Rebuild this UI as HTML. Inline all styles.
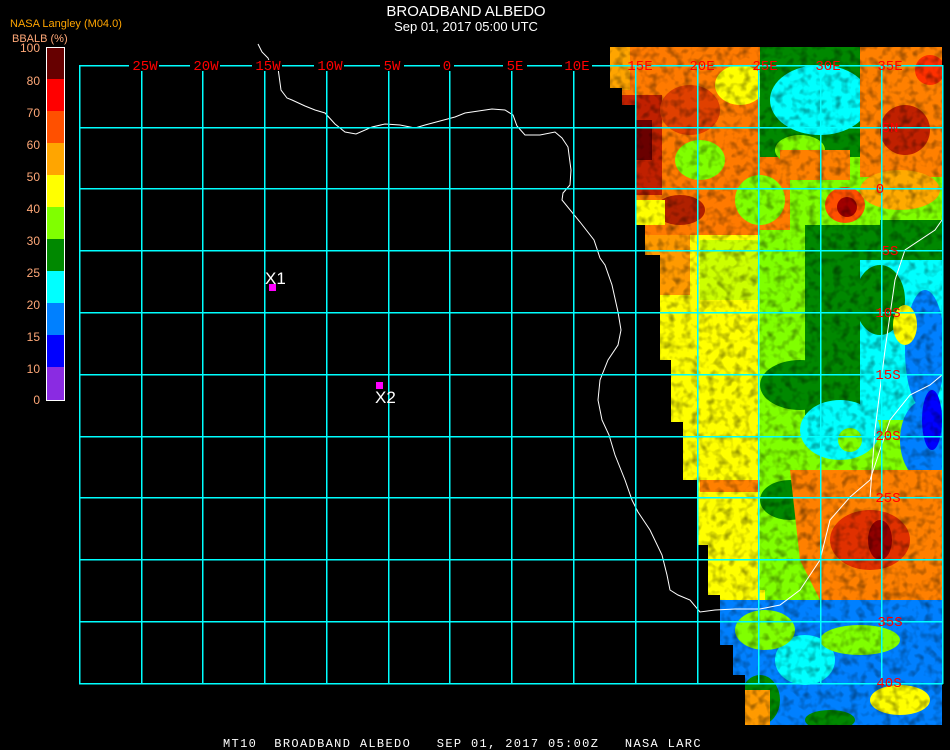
<!DOCTYPE html>
<html><head><meta charset="utf-8"><style>
html,body{margin:0;padding:0;background:#000;}
body{width:950px;height:750px;position:relative;overflow:hidden;font-family:"Liberation Sans",sans-serif;}
</style></head><body>
<svg width="950" height="750" style="position:absolute;left:0;top:0">
<defs>
<clipPath id="dc"><polygon points="610,47 942,47 942,725 745,725 745,675 733,675 733,645 720,645 720,595 708,595 708,545 697,545 697,480 683,480 683,422 671,422 671,360 660,360 660,255 645,255 645,225 635,225 635,105 622,105 622,88 610,88"/></clipPath>
<filter id="nz" x="0" y="0" width="100%" height="100%"><feTurbulence type="fractalNoise" baseFrequency="0.12" numOctaves="2" seed="4"/><feColorMatrix values="0 0 0 0 0  0 0 0 0 0  0 0 0 0 0  0 0 0 2.2 -1.0"/></filter>
</defs>
<g clip-path="url(#dc)">
<rect x="600" y="40" width="350" height="700" fill="#80ff00"/>
<rect x="600" y="40" width="190" height="195" fill="#ff7a00"/>
<rect x="600" y="40" width="30" height="50" fill="#ffa500"/>
<rect x="622" y="95" width="40" height="100" fill="#c02000"/>
<rect x="630" y="120" width="22" height="40" fill="#6a0000"/>
<ellipse cx="690" cy="110" rx="30" ry="25" fill="#e04000"/>
<ellipse cx="700" cy="160" rx="25" ry="20" fill="#80ff00"/>
<ellipse cx="740" cy="85" rx="25" ry="20" fill="#ffff00"/>
<ellipse cx="680" cy="210" rx="25" ry="15" fill="#b02000"/>
<ellipse cx="760" cy="200" rx="25" ry="25" fill="#80ff00"/>
<rect x="635" y="200" width="30" height="25" fill="#ffff00"/>
<rect x="760" y="47" width="100" height="110" fill="#008800"/>
<ellipse cx="820" cy="100" rx="50" ry="35" fill="#00ffff"/>
<ellipse cx="800" cy="150" rx="25" ry="15" fill="#80ff00"/>
<rect x="860" y="47" width="82" height="130" fill="#ff8000"/>
<ellipse cx="905" cy="130" rx="25" ry="25" fill="#c02000"/>
<ellipse cx="930" cy="70" rx="15" ry="15" fill="#ff3000"/>
<rect x="780" y="150" width="70" height="30" fill="#ff8000"/>
<ellipse cx="845" cy="205" rx="20" ry="18" fill="#ff5000"/>
<ellipse cx="847" cy="207" rx="10" ry="10" fill="#a00000"/>
<ellipse cx="900" cy="190" rx="40" ry="20" fill="#ffaa00"/>
<rect x="880" y="220" width="62" height="40" fill="#008800"/>
<rect x="645" y="235" width="115" height="250" fill="#ffff00"/>
<rect x="645" y="235" width="45" height="60" fill="#ff9a00"/>
<rect x="700" y="240" width="60" height="60" fill="#ccff00"/>
<rect x="760" y="230" width="50" height="130" fill="#80ff00"/>
<rect x="805" y="225" width="85" height="190" fill="#008800"/>
<ellipse cx="800" cy="385" rx="40" ry="25" fill="#008800"/>
<rect x="860" y="260" width="82" height="160" fill="#00ffff"/>
<ellipse cx="880" cy="300" rx="25" ry="35" fill="#008800"/>
<ellipse cx="925" cy="350" rx="20" ry="60" fill="#0080ff"/>
<ellipse cx="925" cy="440" rx="25" ry="40" fill="#0080ff"/>
<ellipse cx="932" cy="420" rx="10" ry="30" fill="#0000ff"/>
<ellipse cx="840" cy="430" rx="40" ry="30" fill="#00ffff"/>
<ellipse cx="905" cy="325" rx="12" ry="20" fill="#ffff00"/>
<rect x="690" y="470" width="75" height="140" fill="#ffff00"/>
<rect x="760" y="470" width="60" height="120" fill="#80ff00"/>
<ellipse cx="790" cy="500" rx="30" ry="20" fill="#008800"/>
<polygon points="790,470 942,470 942,600 820,600 800,560" fill="#ff8000"/>
<ellipse cx="870" cy="540" rx="40" ry="30" fill="#e03000"/>
<ellipse cx="880" cy="540" rx="12" ry="20" fill="#900000"/>
<ellipse cx="850" cy="440" rx="12" ry="12" fill="#80ff00"/>
<rect x="700" y="480" width="60" height="12" fill="#ff8000"/>
<rect x="700" y="600" width="250" height="140" fill="#0080ff"/>
<ellipse cx="805" cy="660" rx="30" ry="25" fill="#00ffff"/>
<ellipse cx="760" cy="700" rx="20" ry="25" fill="#008800"/>
<ellipse cx="765" cy="630" rx="30" ry="20" fill="#80ff00"/>
<ellipse cx="860" cy="640" rx="40" ry="15" fill="#80ff00"/>
<ellipse cx="900" cy="700" rx="30" ry="15" fill="#ffff00"/>
<ellipse cx="830" cy="720" rx="25" ry="10" fill="#008800"/>
<rect x="745" y="690" width="25" height="35" fill="#ff9a00"/>
<rect x="600" y="40" width="350" height="700" filter="url(#nz)" opacity="0.45"/>
</g>
<polyline fill="none" stroke="#fff" stroke-width="1" points="258,44 262,52 268,58 272,68 278,68 281,90 287,98 292,100 305,106 315,110 325,113 335,124 345,132 356,134 372,127 385,124 400,125 415,128 425,125 440,121 455,117 465,113 492,109 505,110 513,115 517,126 525,135 540,135 555,132 562,138 568,147 571,170 570,185 563,193 562,200 580,222 594,240 600,258 605,265 612,285 618,312 621,330 618,345 608,360 600,380 598,400 602,420 609,435 615,455 625,480 632,500 638,512 650,530 662,555 667,575 670,590 678,595 690,600 700,612 715,610 735,609 760,609 780,605 800,590 820,560 830,520 850,497 870,480 880,450 890,420 910,395 930,385 942,375"/>
<polyline fill="none" stroke="#fff" points="870,498 875,430 885,350 895,280 905,250 935,230 942,220"/>
<g stroke="#00ffff" stroke-width="1.5" fill="none" shape-rendering="crispEdges">
<path d="M79.5 65V684M141.5 65V684M202.5 65V684M264.5 65V684M326.5 65V684M388.5 65V684M449.5 65V684M511.5 65V684M573.5 65V684M635.5 65V684M697.5 65V684M758.5 65V684M820.5 65V684M881.5 65V684M942.5 65V684"/>
<path d="M79 65.5H943M79 127.5H943M79 188.5H943M79 250.5H943M79 312.5H943M79 374.5H943M79 436.5H943M79 497.5H943M79 559.5H943M79 621.5H943M79 683.5H943"/>
</g>
<g fill="#000"><rect x="129" y="60" width="30" height="11"/><rect x="190" y="60" width="30" height="11"/><rect x="252" y="60" width="30" height="11"/><rect x="314" y="60" width="30" height="11"/><rect x="380" y="60" width="24" height="11"/><rect x="440" y="60" width="14" height="11"/><rect x="503" y="60" width="24" height="11"/><rect x="562" y="60" width="30" height="11"/></g>
<g font-family="Liberation Mono,monospace" font-size="14" fill="#ff0000" text-anchor="middle">
<text x="145" y="70">25W</text><text x="206" y="70">20W</text><text x="268" y="70">15W</text><text x="330" y="70">10W</text><text x="392" y="70">5W</text><text x="447" y="70">0</text><text x="515" y="70">5E</text><text x="577" y="70">10E</text><text x="640" y="70">15E</text><text x="702" y="70">20E</text><text x="765" y="70">25E</text><text x="828" y="70">30E</text><text x="890" y="70">35E</text>
<text x="890" y="132">5N</text><text x="880" y="193">0</text><text x="890" y="255">5S</text><text x="888" y="317">10S</text><text x="888" y="379">15S</text><text x="888" y="440">20S</text><text x="888" y="502">25S</text><text x="890" y="626">35S</text><text x="889" y="687">40S</text>
</g>
<rect x="269" y="284" width="7" height="7" fill="#ff00ff"/>
<rect x="376" y="382" width="7" height="7" fill="#ff00ff"/>
<text x="265" y="284" font-family="Liberation Sans,sans-serif" font-size="17" fill="#fff">X1</text>
<text x="375" y="403" font-family="Liberation Sans,sans-serif" font-size="17" fill="#fff">X2</text>
<g>
<rect x="46" y="47" width="18" height="32" fill="#660000"/>
<rect x="46" y="79" width="18" height="32" fill="#ff0000"/>
<rect x="46" y="111" width="18" height="32" fill="#ff5000"/>
<rect x="46" y="143" width="18" height="32" fill="#ffa500"/>
<rect x="46" y="175" width="18" height="32" fill="#ffff00"/>
<rect x="46" y="207" width="18" height="32" fill="#80ff00"/>
<rect x="46" y="239" width="18" height="32" fill="#008800"/>
<rect x="46" y="271" width="18" height="32" fill="#00ffff"/>
<rect x="46" y="303" width="18" height="32" fill="#0080ff"/>
<rect x="46" y="335" width="18" height="32" fill="#0000ff"/>
<rect x="46" y="367" width="18" height="33" fill="#8a2be2"/>
<rect x="46.5" y="47.5" width="18" height="353" fill="none" stroke="#fff" stroke-width="1"/>
</g>
<g font-family="Liberation Sans,sans-serif" font-size="12" fill="#ffa878" text-anchor="end">
<text x="40" y="52">100</text><text x="40" y="85">80</text><text x="40" y="117">70</text><text x="40" y="149">60</text><text x="40" y="181">50</text><text x="40" y="213">40</text><text x="40" y="245">30</text><text x="40" y="277">25</text><text x="40" y="309">20</text><text x="40" y="341">15</text><text x="40" y="373">10</text><text x="40" y="404">0</text>
</g>
<text x="10" y="27" font-family="Liberation Sans,sans-serif" font-size="11" fill="#ffa500">NASA Langley (M04.0)</text>
<text x="12" y="42" font-family="Liberation Sans,sans-serif" font-size="11" fill="#ffa878">BBALB (%)</text>
<text x="466" y="16" text-anchor="middle" font-family="Liberation Sans,sans-serif" font-size="15" fill="#fff">BROADBAND ALBEDO</text>
<text x="466" y="31" text-anchor="middle" font-family="Liberation Sans,sans-serif" font-size="13" fill="#fff">Sep 01, 2017 05:00 UTC</text>
<text x="223" y="747" font-family="Liberation Mono,monospace" font-size="12" letter-spacing="1.35" fill="#fff" xml:space="preserve">MT10  BROADBAND ALBEDO   SEP 01, 2017 05:00Z   NASA LARC</text>
</svg>
</body></html>
